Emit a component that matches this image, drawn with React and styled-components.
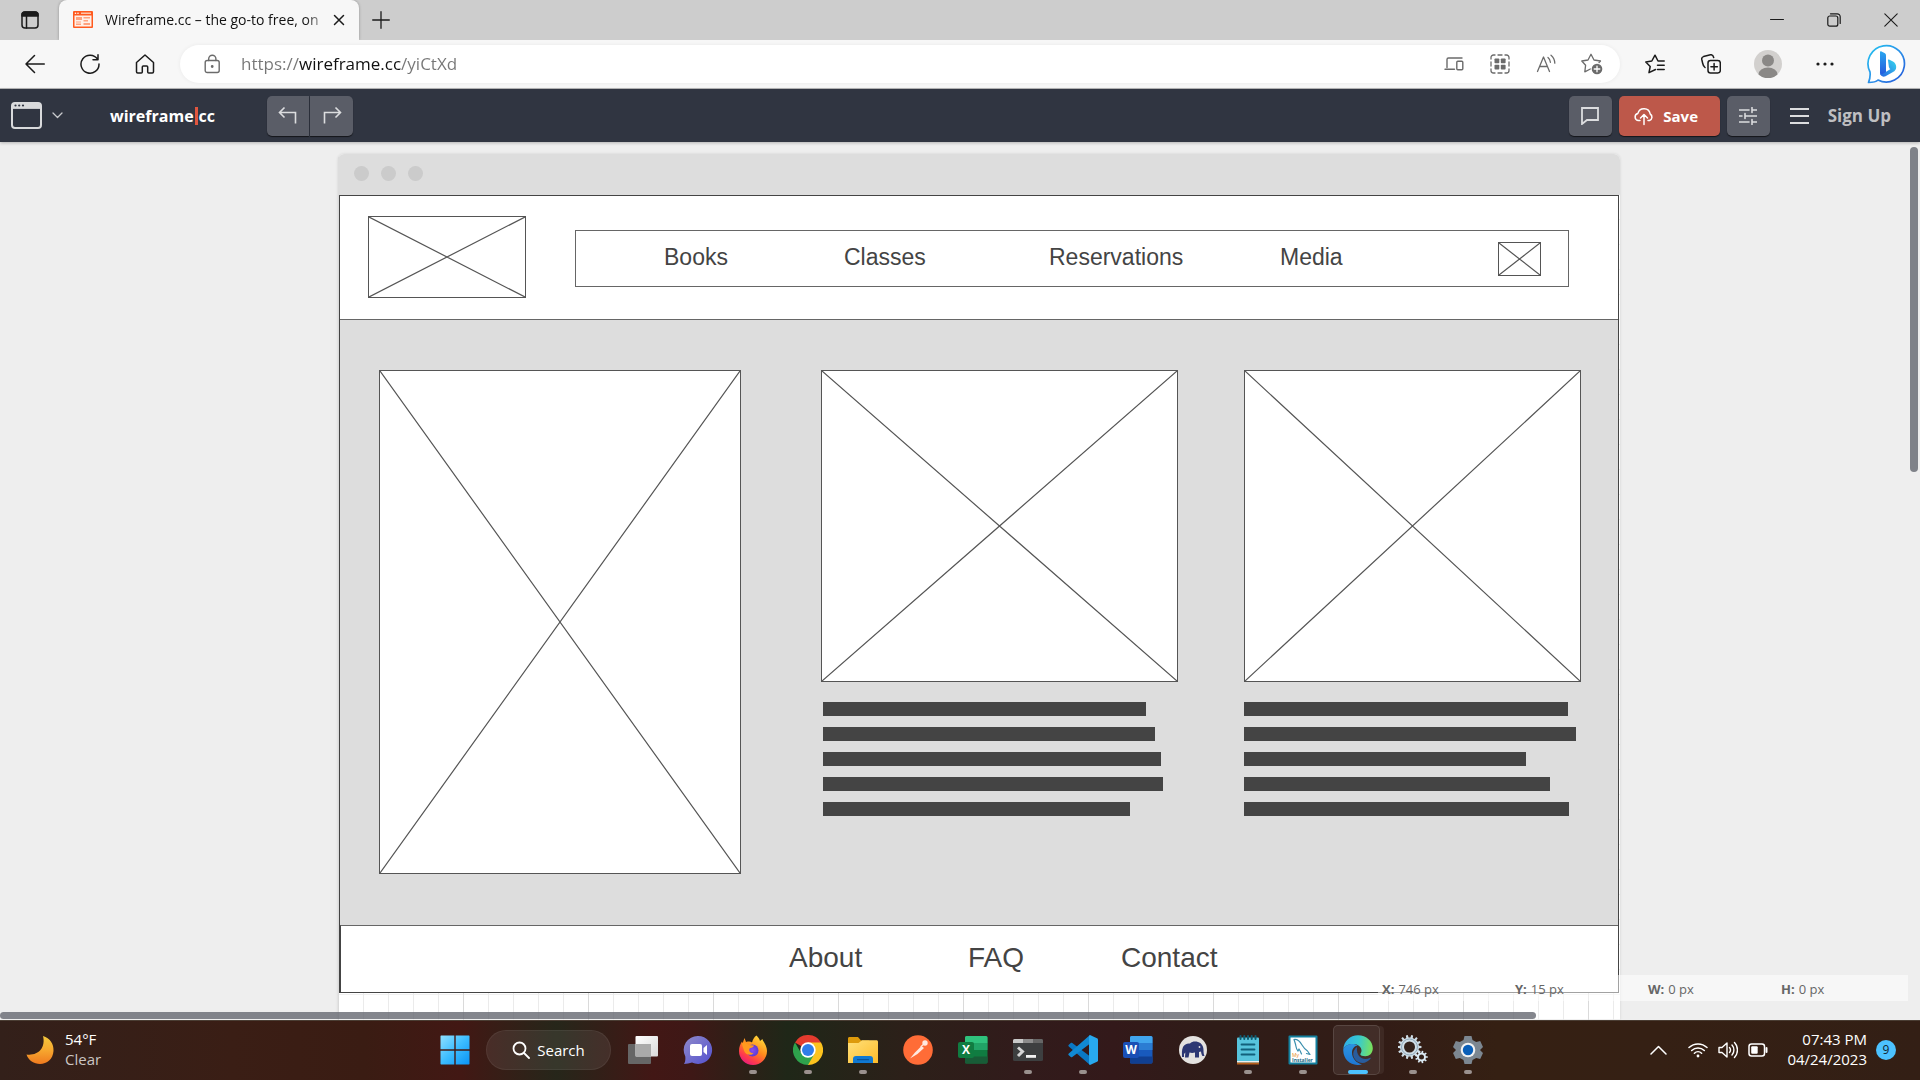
import React from "react";
import styled, { createGlobalStyle, css } from "styled-components";

const UI = `"Open Sans", "Noto Sans", sans-serif`;
const WIRE = `"Liberation Sans", Arial, sans-serif`;
const INK = "#444";

const GlobalStyle = createGlobalStyle`
  * { box-sizing: border-box; }
  html, body { margin: 0; padding: 0; }
  body { font-family: ${UI}; overflow: hidden; }
  button { font: inherit; color: inherit; border: 0; padding: 0; margin: 0; background: none; cursor: pointer; }
  a { color: inherit; text-decoration: none; }
  svg { display: block; flex: none; }
`;

const Page = styled.div`
  display: flex;
  flex-direction: column;
  height: 100vh;
  background: #eee;
`;

/* ---------- browser chrome ---------- */

const TabStrip = styled.div`
  display: flex;
  height: 40px;
  background: #cdcdcd;
`;

const IconCell = styled.button`
  display: flex;
  align-items: center;
  justify-content: center;
  width: ${(p) => p.$w || 56}px;
  height: 100%;
  color: ${(p) => p.$color || "#1b1b1b"};
`;

const Tab = styled.div`
  display: flex;
  align-items: center;
  width: 300px;
  padding: 0 8px 0 14px;
  border-radius: 8px 8px 0 0;
  background: #f7f7f7;
  box-shadow: 0 0 3px rgba(0, 0, 0, 0.3);
  clip-path: inset(0 -4px 0 -4px);
`;

const TabTitle = styled.span`
  flex: 1;
  margin-left: 12px;
  white-space: nowrap;
  font-size: 14px;
  line-height: 20px;
  color: #111;
  mask-image: linear-gradient(to right, #000 90%, rgba(0, 0, 0, 0.2) 100%);
`;

const Spacer = styled.div`
  flex: 1;
`;

const Toolbar = styled.div`
  display: flex;
  align-items: center;
  height: 49px;
  padding-left: 7px;
  background: #f7f7f7;
  border-bottom: 1px solid #b9b9bb;
`;

const AddressBar = styled.form`
  display: flex;
  align-items: center;
  flex: 1;
  height: 38px;
  margin: 0 7px 0 8px;
  padding: 0 5px 0 24px;
  border-radius: 19px;
  background: #fff;
  box-shadow: 0 0 4px rgba(0, 0, 0, 0.06);
`;

const AddressInput = styled.input`
  flex: 1;
  min-width: 0;
  margin-left: 20px;
  padding: 0;
  border: 0;
  outline: 0;
  font-family: ${UI};
  font-size: 17px;
  line-height: 24px;
  color: #767676;
  background: linear-gradient(to right, #767676 58px, #111 58px, #111 160px, #767676 160px);
  background-clip: text;
  -webkit-text-fill-color: transparent;
`;

/* ---------- application bar ---------- */

const AppBar = styled.header`
  display: flex;
  align-items: center;
  height: 53px;
  padding: 0 29px 0 11px;
  background: #303541;
  box-shadow: 0 1px 3px rgba(0, 0, 0, 0.25);
  position: relative;
  z-index: 2;
`;

const DeviceButton = styled.button`
  display: flex;
  align-items: center;
  gap: 10px;
`;

const Brand = styled.a`
  display: flex;
  align-items: center;
  margin: 0 52px 0 47px;
  font-size: 16px;
  line-height: 24px;
  font-weight: 700;
  color: #fff;
`;

const BrandBar = styled.i`
  width: 3px;
  height: 18px;
  margin: 0 1px;
  background: #e0563f;
`;

const ToolButton = styled.button`
  display: flex;
  align-items: center;
  justify-content: center;
  gap: 9px;
  width: ${(p) => p.$w || 43}px;
  height: 40px;
  padding-right: ${(p) => (p.$primary ? 6 : 0)}px;
  border-radius: 5px;
  background: ${(p) => (p.$primary ? "#bd584a" : "#5a5d67")};
  color: ${(p) => (p.$primary ? "#fff" : "#dcdddf")};
  box-shadow: 0 1px 1px rgba(0, 0, 0, 0.6);
  font-size: 15px;
  font-weight: 700;
  ${(p) => p.$side === "left" && css`border-radius: 5px 0 0 5px;`}
  ${(p) => p.$side === "right" && css`border-radius: 0 5px 5px 0;`}
`;

const Group = styled.div`
  display: flex;
  gap: ${(p) => p.$gap}px;
`;

const MenuButton = styled.button`
  display: flex;
  margin: 0 19px 0 20px;
`;

const SignUp = styled.a`
  font-size: 17px;
  line-height: 24px;
  font-weight: 700;
  color: #bfbfc1;
`;

/* ---------- canvas ---------- */

const Workspace = styled.main`
  position: relative;
  flex: 1;
  min-height: 0;
  overflow: hidden;
  padding: 12px 300px 0 338px;
  background: #eee;
`;

const Canvas = styled.section`
  min-height: 100%;
  border-radius: 6px 6px 0 0;
  background-color: #fff;
  background-image: linear-gradient(to right, #dadada 1px, transparent 1px),
    linear-gradient(to right, #ebebeb 1px, transparent 1px),
    linear-gradient(to bottom, #f0f0f0 1px, transparent 1px);
  background-size: 125px 100%, 25px 100%, 100% 25px;
  background-position: 0 0, 0 0, 0 15px;
  box-shadow: 0 0 3px rgba(0, 0, 0, 0.12);
`;

const WindowBar = styled.div`
  display: flex;
  align-items: center;
  gap: 12px;
  height: 41px;
  padding: 0 16px 2px;
  border-radius: 6px 6px 0 0;
  background: #ddd;
`;

const Dot = styled.i`
  width: 15px;
  height: 15px;
  border-radius: 50%;
  background: #cbcbcb;
`;

const Sheet = styled.div`
  margin: 0 1px;
  border: 1px solid ${INK};
  font-family: ${WIRE};
  color: ${INK};
`;

const WireHeader = styled.div`
  display: grid;
  grid-template-columns: 158fr 994fr;
  align-items: start;
  gap: 49px;
  height: 124px;
  padding: 20px 49px 0 28px;
  background: #fff;
  border-bottom: 1px solid #666;
`;

const WireNav = styled.nav`
  display: grid;
  grid-template-columns: 180fr 205fr 231fr 218fr 43fr;
  align-items: center;
  height: 57px;
  margin-top: 14px;
  padding: 0 27px 0 88px;
  border: 1px solid #666;
`;

const WireLink = styled.a`
  padding-bottom: 3px;
  font-size: ${(p) => p.$size}px;
  line-height: 32px;
`;

const WireMain = styled.div`
  display: grid;
  grid-template-columns: 362fr 80fr 357fr 66fr 337fr;
  height: 605px;
  padding: 50px 37px 0 39px;
  background: #ddd;
`;

const Column = styled.div`
  grid-column: ${(p) => p.$col};
`;

const Placeholder = styled.div`
  height: ${(p) => p.$h}px;
  border: 1px solid #555;
  background: #fff;
  svg { width: 100%; height: 100%; }
`;

const Lines = styled.div`
  display: flex;
  flex-direction: column;
  gap: 11px;
  padding: 20px 0 0 ${(p) => p.$inset}px;
`;

const Line = styled.i`
  width: ${(p) => p.$w}px;
  max-width: 100%;
  height: 14px;
  background: ${INK};
`;

const WireFooter = styled.nav`
  display: grid;
  grid-template-columns: 179fr 153fr 497fr;
  align-items: center;
  height: 67px;
  padding-left: 448px;
  background: #fff;
  border-top: 1px solid #666;
  border-left: 1px solid ${INK};
`;

const Readout = styled.dl`
  position: absolute;
  right: 12px;
  bottom: 19px;
  display: grid;
  grid-template-columns: repeat(4, 133px);
  width: 530px;
  height: 26px;
  margin: 0;
  padding: 2px 0 0 4px;
  align-items: center;
  background: rgba(255, 255, 255, 0.5);
  font-size: 13px;
  line-height: 18px;
  color: #666;
`;

const Reading = styled.div`
  display: flex;
  gap: 4px;
  dt { font-weight: 700; }
  dd { margin: 0; }
`;

const VerticalThumb = styled.div`
  position: absolute;
  right: 2px;
  top: 5px;
  width: 8px;
  height: 325px;
  border-radius: 4px;
  background: #7f8289;
`;

const HorizontalThumb = styled.div`
  position: absolute;
  left: 0;
  bottom: 1px;
  width: 80%;
  height: 7px;
  border-radius: 4px;
  background: rgba(101, 104, 113, 0.8);
`;

/* ---------- taskbar ---------- */

const Taskbar = styled.footer`
  display: grid;
  grid-template-columns: 1fr auto 1fr;
  height: 60px;
  box-shadow: inset 0 1px 0 #4a3d33;
  color: #fff;
  background: linear-gradient(to right, #33201a 0%, #3a1e15 12%, #3a1c13 19%, #421814 24%, #26261a 29%, #421715 34%, #3e1816 36%, #1f2718 41%, #2c2019 47%, #311b1b 53%, #33191a 58%, #2f1c18 63%, #321c16 72%, #352013 78%, #352014 86%, #331f15 100%);
`;

const Weather = styled.button`
  display: flex;
  align-items: center;
  gap: 11px;
  padding-left: 26px;
  text-align: left;
  font-size: 15px;
  line-height: 20px;
`;

const Stack = styled.span`
  display: flex;
  flex-direction: column;
  padding-bottom: 2px;
  align-items: ${(p) => (p.$end ? "flex-end" : "flex-start")};
`;

const Muted = styled.span`
  color: #cbc5c2;
`;

const Apps = styled.div`
  display: flex;
  align-items: center;
  padding-left: 2px;
`;

const TaskButton = styled.button`
  position: relative;
  display: flex;
  align-items: center;
  justify-content: center;
  width: 55px;
  height: 100%;
`;

const ActivePlate = styled.span`
  position: absolute;
  inset: 5px 5px 5px 3px;
  border: 1px solid rgba(255, 255, 255, 0.12);
  border-radius: 5px;
  background: rgba(255, 255, 255, 0.08);
  box-shadow: 5px 0 0 -1px rgba(255, 255, 255, 0.06);
`;

const Running = styled.i`
  position: absolute;
  bottom: 6px;
  width: ${(p) => (p.$active ? 20 : 8)}px;
  height: 4px;
  border-radius: 2px;
  background: ${(p) => (p.$active ? "#4cc2ff" : "#9a918e")};
`;

const SearchPill = styled.button`
  display: flex;
  align-items: center;
  justify-content: center;
  gap: 7px;
  width: 125px;
  height: 40px;
  margin: 0 4px;
  border-radius: 20px;
  border: 1px solid rgba(255, 255, 255, 0.06);
  background: rgba(255, 255, 255, 0.08);
  font-size: 15px;
  line-height: 20px;
`;

const Tray = styled.div`
  display: flex;
  align-items: center;
  justify-content: flex-end;
  padding-right: 24px;
`;

const TrayGroup = styled.button`
  display: flex;
  align-items: center;
  gap: 10px;
  margin: 0 19px 0 21px;
`;

const Clock = styled.button`
  font-size: 15px;
  line-height: 20px;
`;

const Badge = styled.span`
  display: flex;
  align-items: center;
  justify-content: center;
  width: 20px;
  height: 20px;
  margin-left: 9px;
  border-radius: 50%;
  background: #4cc2ff;
  color: #12242f;
  font-size: 12px;
  line-height: 20px;
`;

/* ---------- drawings ---------- */

const Svg = ({ s = 20, w, h, box, sw = 1.5, children, ...rest }) => (
  <svg
    width={w || s}
    height={h || s}
    viewBox={box || `0 0 ${w || s} ${h || s}`}
    fill="none"
    stroke="currentColor"
    strokeWidth={sw}
    strokeLinecap="round"
    strokeLinejoin="round"
    aria-hidden="true"
    {...rest}
  >
    {children}
  </svg>
);

const Cross = () => (
  <svg viewBox="0 0 100 100" preserveAspectRatio="none" aria-hidden="true">
    <path d="M0 0L100 100M100 0L0 100" stroke="#555" strokeWidth="1.2" vectorEffect="non-scaling-stroke" fill="none" />
  </svg>
);

const TabActions = () => (
  <Svg w={20} h={20}>
    <rect x="2" y="2" width="16" height="16" rx="3" />
    <path d="M2 6V5a3 3 0 0 1 3-3h10a3 3 0 0 1 3 3v1z" fill="currentColor" />
    <path d="M6.500 6V18" />
  </Svg>
);

const Favicon = () => (
  <Svg w={20} h={18} stroke="none">
    <rect width="20" height="17" rx="1" fill="#ff5a1f" />
    <rect x="1.500" y="4.500" width="17" height="11" fill="#fff0e8" />
    <path d="M3 6h6v3H3zM3 10.500h5v1H3zM3 12.500h5v1.500H3zM10.500 6H17v1.500h-6.500zM10.500 9H15v1.500h-4.500zM10.500 12H17v2h-6.500z" fill="#ffa27f" />
    <circle cx="2.500" cy="2.200" r=".8" fill="#fff" />
    <circle cx="5" cy="2.200" r=".8" fill="#fff" />
    <rect x="8" y="1.500" width="10" height="1.500" fill="#ffc3a8" />
  </Svg>
);

const DeviceWindow = () => (
  <Svg w={31} h={27} sw={2}>
    <rect x="1" y="1" width="29" height="25" rx="3" stroke="#d9dadc" fill="#303541" />
    <path d="M1 6V4a3 3 0 0 1 3-3h23a3 3 0 0 1 3 3v2z" fill="#d9dadc" stroke="#d9dadc" strokeWidth="1" />
    <g fill="#303541" stroke="none">
      <circle cx="4.500" cy="3.500" r="1.100" /><circle cx="8.200" cy="3.500" r="1.100" /><circle cx="12" cy="3.500" r="1.100" />
    </g>
  </Svg>
);

const Bing = () => (
  <Svg w={40} h={40}>
    <defs>
      <linearGradient id="bingRing" x1="0" y1="0" x2="1" y2="1">
        <stop offset="0" stopColor="#22c4f0" /><stop offset=".55" stopColor="#2b8de8" /><stop offset="1" stopColor="#2455d8" />
      </linearGradient>
      <linearGradient id="bingStem" x1="0" y1="0" x2="0" y2="1">
        <stop offset="0" stopColor="#2aa7f0" /><stop offset="1" stopColor="#2458dc" />
      </linearGradient>
      <linearGradient id="bingBowl" x1="1" y1="0" x2="0" y2="1">
        <stop offset="0" stopColor="#37d8ef" /><stop offset="1" stopColor="#2563e0" />
      </linearGradient>
    </defs>
    <path d="M1.500 38.500C3 35 3.500 32 3 28A18.200 18.200 0 1 1 11 36C8.500 38.500 5 38.500 1.500 38.500Z" fill="#fff" stroke="url(#bingRing)" strokeWidth="1.700" />
    <path d="M13 8.200c0-.8.800-1.200 1.500-.8l3 1.700c1 .6 1.500 1.500 1.500 2.600V29l-3.200 2c-1.500.6-2.800-.8-2.800-2z" fill="url(#bingStem)" stroke="none" />
    <path d="M21 16.500c-.3-.8.300-1.300 1-1l3.500 1.700c2.500 1.300 3.700 3.300 3.700 5.800 0 2.400-1.300 4-3.200 5.100l-7.500 4.100c-2.700 1.300-5.500-.5-5.500-3.200 1 1.200 2.500 1.100 3.800.3l6.700-4.300c-1-.3-1.300-1.300-1.600-2z" fill="url(#bingBowl)" stroke="none" />
  </Svg>
);

const Moon = () => (
  <Svg w={28} h={30}>
    <defs><linearGradient id="moon" x1="0" y1="0" x2="0" y2="1"><stop offset="0" stopColor="#f5c93c" /><stop offset=".5" stopColor="#f7a82f" /><stop offset="1" stopColor="#f07a1f" /></linearGradient></defs>
    <path d="M17 1C24 3 28 9 27.500 16 27 24 21 29 14 29 8 29 2.500 25.500 .5 19.500 12 21 20 13 17 1Z" fill="url(#moon)" stroke="none" />
  </Svg>
);

const WindowsLogo = () => (
  <Svg s={30} stroke="none">
    <defs><linearGradient id="win" x1="0" y1="0" x2="1" y2="1"><stop offset="0" stopColor="#8fe0ff" /><stop offset=".5" stopColor="#3cbcff" /><stop offset="1" stopColor="#0a93f5" /></linearGradient></defs>
    <path d="M1 .5h13.300v13.700H.5V1zM15.700.5H29l.5.500v13.200H15.700zM.5 15.700h13.800v13.800H1l-.5-.5zM15.700 15.700h13.800V29l-.5.500H15.700z" fill="url(#win)" />
  </Svg>
);

const TaskView = () => (
  <Svg s={30} stroke="none">
    <defs><linearGradient id="tvf" x1="0" y1="0" x2="1" y2="1"><stop offset="0" stopColor="#fff" /><stop offset="1" stopColor="#d9d9d9" /></linearGradient></defs>
    <rect x="0" y="9" width="23" height="20" rx="1" fill="#666" />
    <rect x="7.500" y="1" width="22.500" height="20.500" rx="1" fill="url(#tvf)" />
    <path d="M7.500 9H23v12.500H7.500z" fill="#aaa" />
  </Svg>
);

const Chat = () => (
  <Svg s={30} stroke="none">
    <defs><linearGradient id="chat" x1="0" y1="0" x2="1" y2="1"><stop offset="0" stopColor="#8f8ac9" /><stop offset="1" stopColor="#5350d0" /></linearGradient></defs>
    <path d="M15 1a14 14 0 1 1-6 26.600C6.500 28.500 4 29 1 29c1.400-2 1.500-4.500 1.300-7.500A14 14 0 0 1 15 1z" fill="url(#chat)" />
    <rect x="7" y="9" width="12" height="12" rx="2" fill="#fff" />
    <path d="M20.500 13l3.500-3v10l-3.500-3z" fill="#fff" />
  </Svg>
);

const Firefox = () => (
  <Svg s={30} stroke="none">
    <defs>
      <linearGradient id="ff" x1=".8" y1="0" x2=".2" y2="1"><stop offset="0" stopColor="#ffe23c" /><stop offset=".45" stopColor="#ff8a1c" /><stop offset=".75" stopColor="#ff3d4a" /><stop offset="1" stopColor="#e31587" /></linearGradient>
      <radialGradient id="ffc"><stop offset="0" stopColor="#8a4df0" /><stop offset="1" stopColor="#5b3bd0" /></radialGradient>
    </defs>
    <path d="M18.500.5c2 2 3 3.500 3.500 5.500l2.500-2c0 2 4.500 6 4.500 12a14 14 0 0 1-28 0c0-4 1.500-7.500 3-9.500l.5 2L6.500 3l1.500 4c3-.8 5-.5 6 .5 1-3 2-5.500 4.500-7z" fill="url(#ff)" />
    <circle cx="14.500" cy="15.500" r="6" fill="url(#ffc)" />
    <path d="M4 8c3-1 5 0 7 2l5 .5c-.5 2-3 2.500-4.500 3-1 3 1.500 5 4 4.500-2 3-8 2.500-9.500-2.500C5.300 12.500 4 11 4 8z" fill="#ff9a1f" />
  </Svg>
);

const Chrome = () => (
  <Svg s={30} stroke="none">
    <path d="M15 15L2 7.500A15 15 0 0 1 28 7.500z" fill="#e33b2e" />
    <path d="M15 15V7.500h13A15 15 0 0 1 15 30z" fill="#fcc31e" />
    <path d="M15 15l6.500 3.700L15 30A15 15 0 0 1 2 7.500l6.500 11.200z" fill="#2ea24c" />
    <circle cx="15" cy="15" r="7.700" fill="#fff" />
    <circle cx="15" cy="15" r="6" fill="#2f7de9" />
  </Svg>
);

const Explorer = () => (
  <Svg s={30} stroke="none">
    <defs><linearGradient id="fold" x1="0" y1="0" x2="1" y2="1"><stop offset="0" stopColor="#ffe07a" /><stop offset="1" stopColor="#fdbc2a" /></linearGradient></defs>
    <path d="M0 3.500C0 2.500.7 2 1.500 2H10l3 3.500h8V12H0z" fill="#dd9a0b" />
    <path d="M0 8h10.500L14 5.200h14.500c.8 0 1.500.6 1.500 1.500V28H0z" fill="url(#fold)" />
    <path d="M5 28v-4a3 3 0 0 1 3-3h14a3 3 0 0 1 3 3v4z" fill="#1079d2" />
    <path d="M9 24.200h12v1H9z" fill="#0a4b8c" />
  </Svg>
);

const Postman = () => (
  <Svg s={30}>
    <circle cx="15" cy="15" r="14.800" fill="#ff6c37" stroke="none" />
    <path d="M7 23.500l5-6 6.500-6.500 2.500 2-6.500 6z" fill="#ffe9e0" stroke="none" />
    <circle cx="22" cy="8" r="2.700" fill="#ffe9e0" stroke="none" />
    <path d="M18 11.500l3-2.500" stroke="#ffe9e0" strokeWidth="1.200" />
  </Svg>
);

const AppLetter = styled.span`
  position: absolute;
  left: 13px;
  display: flex;
  align-items: center;
  justify-content: center;
  width: 16px;
  height: 16px;
  border-radius: 2px;
  background: ${(p) => p.$bg};
  color: #fff;
  font-size: 12px;
  font-weight: 700;
  line-height: 16px;
`;

const Office = ({ tones, letter, plate }) => (
  <>
    <Svg s={30} stroke="none">
      <rect x="7" y="1" width="22.500" height="27.500" rx="1.500" fill={tones[2]} />
      <path d="M8.500 1H28a1.500 1.500 0 0 1 1.500 1.500V8H7V2.500A1.500 1.500 0 0 1 8.500 1z" fill={tones[0]} />
      <path d="M7 8h22.500v7H7z" fill={tones[1]} />
      <path d="M7 21.500h22.500V27a1.500 1.500 0 0 1-1.500 1.500H8.500A1.500 1.500 0 0 1 7 27z" fill={tones[3]} />
    </Svg>
    <AppLetter $bg={plate}>{letter}</AppLetter>
  </>
);

const Terminal = () => (
  <Svg s={30} stroke="none">
    <rect x="0" y="4" width="30" height="22" rx="1.500" fill="#3d3f40" />
    <path d="M0 8V5.500A1.500 1.500 0 0 1 1.500 4H10v4z" fill="#c9c9c9" />
    <path d="M10 4h10v4H10z" fill="#8c8c8c" />
    <path d="M20 4h8.500A1.500 1.500 0 0 1 30 5.500V8H20z" fill="#666" />
    <path d="M5 12.500l4.500 4L5 21" stroke="#d5d5d5" strokeWidth="3" fill="none" strokeLinecap="butt" strokeLinejoin="miter" />
    <rect x="13" y="20" width="10" height="2.800" fill="#f2f2f2" />
  </Svg>
);

const VSCode = () => (
  <Svg s={30} stroke="none">
    <path d="M22 30L.8 11.600c-.6-.6-.6-1.300 0-1.800l2-1.700c.5-.4 1-.4 1.500 0L22.500 21.700z" fill="#0a78c4" />
    <path d="M22 0L.8 18.400c-.6.600-.6 1.300 0 1.800l2 1.700c.5.400 1 .4 1.500 0L22.500 8.300z" fill="#118ad4" />
    <path d="M22 0l7 3.200c.6.300 1 .8 1 1.500v20.600c0 .7-.4 1.200-1 1.500L22 30l-1-1V1z" fill="#28a9ee" />
  </Svg>
);

const Elephant = () => (
  <Svg s={30} stroke="none">
    <circle cx="15" cy="15" r="14" fill="#e4e2e0" />
    <path d="M4 22c0-3-.5-7 1-10 1.500-2.500 4-4 7-3.500 2-2 5-2.500 8-1.500 3.500 1 5.500 4 5.500 8 0 2.500.3 4.500 1 6h-2c-1-1.500-1.300-3-1.500-4.500l-2 .5v5.500h-4v-5c-2 .7-4 .6-5.500 0l-1 5H7l.3-5L6 19v3z" fill="#2c3773" />
    <circle cx="21.500" cy="12" r=".9" fill="#e4e2e0" />
  </Svg>
);

const Notepad = () => (
  <Svg s={30} stroke="none">
    <rect x="4" y="2.500" width="22" height="26" rx="1" fill="#57c4dc" />
    <path d="M4 26h22v1.500H4z" fill="#eee" />
    <path d="M4 27.500h22v2H4z" fill="#b85f1c" />
    <path d="M8.500 9.500h13M8.500 14.500h13M8.500 19.500h13" stroke="#12607b" strokeWidth="1.800" />
    <path d="M7.500 1v3M11.300 1v3M15 1v3M18.700 1v3M22.500 1v3" stroke="#0f5a70" strokeWidth="2" />
  </Svg>
);

const MySQL = () => (
  <Svg s={30} stroke="none">
    <rect x="1.500" y="1.500" width="27" height="27" fill="#fff" stroke="#13809f" strokeWidth="2" />
    <path d="M6 4.500c3-.5 6 2 8 5.500 1.500 2.500 2.500 4 5.500 6l2.500 3.500-3.500-1M6 4.500c1 3 1.500 4 2 7 .3 2 1 3.500 2 4.500l1-2c1.500 2 2 3.500 2.500 5" stroke="#3b8fae" strokeWidth="1.200" fill="none" />
    <text x="4" y="22" fontSize="5" fontFamily="Open Sans" fill="#e88b1a">My</text>
    <text x="4" y="27" fontSize="5" fontWeight="700" fontFamily="Open Sans" fill="#1b6c87">Installer</text>
  </Svg>
);

const Edge = () => (
  <Svg s={30} stroke="none">
    <defs>
      <linearGradient id="eg1" x1="0" y1=".3" x2="1" y2=".4"><stop offset="0" stopColor="#1fa6e6" /><stop offset=".5" stopColor="#25c4cf" /><stop offset="1" stopColor="#6ee04f" /></linearGradient>
      <linearGradient id="eg2" x1="0" y1="0" x2="0" y2="1"><stop offset="0" stopColor="#1a8be0" /><stop offset="1" stopColor="#0c6cd0" /></linearGradient>
    </defs>
    <path d="M.3 14C1 6 7 .2 15 .2c8.500 0 14.800 6 14.800 13 0 5-3.500 8-7.500 8-3 0-5-.8-5-2 0-.8 1.200-1.200 1.200-3.700 0-3.500-3.500-6.500-8-6.500C5.500 9 1.500 11 .3 14z" fill="url(#eg1)" />
    <path d="M.3 14C1.500 11 5.500 9 9.500 9c2 0 4 .6 5.300 1.500C11 11 9 14 9 17.500c0 6 4.500 10.500 10 12C9 32 .5 25 .3 16z" fill="url(#eg2)" />
    <path d="M14 12c-2 1.500-3.800 4-3.800 7 0 5 4.500 9 9.300 9 3 0 5.500-1.500 8-4.200.5-.6 0-1.200-.7-.8-6 3-14-.5-12.800-11z" fill="#174f94" />
  </Svg>
);

const gearPath = (cx, cy, r, R, n) => {
  const pts = [];
  for (let i = 0; i < n; i++) {
    const a = (i / n) * Math.PI * 2;
    const st = (Math.PI * 2) / n;
    [[r, -0.28], [R, -0.18], [R, 0.18], [r, 0.28]].forEach(([rad, o]) => {
      pts.push(`${(cx + rad * Math.cos(a + o * st)).toFixed(2)} ${(cy + rad * Math.sin(a + o * st)).toFixed(2)}`);
    });
  }
  return `M${pts.join("L")}Z`;
};

const Gears = () => (
  <Svg s={30} stroke="none">
    <path d={gearPath(11.5, 12, 9.5, 12, 14)} fill="#cfdde6" />
    <circle cx="11.500" cy="12" r="8" fill="none" stroke="#8fa9bb" strokeWidth="1" />
    <circle cx="11.500" cy="12" r="5.500" fill="#33211a" />
    <path d={gearPath(23.5, 22, 4.5, 6.3, 9)} fill="#dcebf5" />
    <circle cx="23.500" cy="22" r="2.500" fill="#33211a" />
  </Svg>
);

const Settings = () => (
  <Svg s={30}>
    <path d="M11.500 1h7l1 4 3.700 2.100 4-1.200 2.800 6-3 3.100 3 3.100-2.800 6-4-1.200-3.700 2.100-1 4h-7l-1-4-3.700-2.100-4 1.200-2.800-6 3-3.100-3-3.100 2.800-6 4 1.200L10.500 5z" fill="#7c8791" stroke="none" />
    <circle cx="15" cy="15" r="7.300" fill="#f2f2f2" stroke="none" />
    <circle cx="15" cy="15" r="5.200" fill="#0a5fb8" stroke="none" />
  </Svg>
);

const TASKS = [
  { name: "Task view", icon: <TaskView /> },
  { name: "Chat", icon: <Chat /> },
  { name: "Firefox", icon: <Firefox />, running: true },
  { name: "Chrome", icon: <Chrome />, running: true },
  { name: "File Explorer", icon: <Explorer />, running: true },
  { name: "Postman", icon: <Postman /> },
  { name: "Excel", icon: <Office letter="X" plate="#107c41" tones={["#2fc27d", "#21a366", "#107c41", "#185c37"]} /> },
  { name: "Terminal", icon: <Terminal />, running: true },
  { name: "Visual Studio Code", icon: <VSCode />, running: true },
  { name: "Word", icon: <Office letter="W" plate="#1a4fb5" tones={["#41a5ee", "#2b7cd3", "#185abd", "#103f91"]} /> },
  { name: "pgAdmin", icon: <Elephant /> },
  { name: "Notepad", icon: <Notepad />, running: true },
  { name: "MySQL Installer", icon: <MySQL />, running: true },
  { name: "Edge", icon: <Edge />, running: true, active: true },
  { name: "Services", icon: <Gears />, running: true },
  { name: "Settings", icon: <Settings />, running: true },
];

const TEXT_BLOCKS = [
  { col: 3, inset: 2, lines: [323, 332, 338, 340, 307] },
  { col: 5, inset: 0, lines: [324, 332, 282, 306, 325] },
];

const READINGS = [["X:", "746 px"], ["Y:", "15 px"], ["W:", "0 px"], ["H:", "0 px"]];

function BrowserChrome() {
  return (
    <>
      <TabStrip>
        <IconCell $w={59} aria-label="Tab actions"><TabActions /></IconCell>
        <Tab>
          <Favicon />
          <TabTitle>Wireframe.cc – the go-to free, on</TabTitle>
          <IconCell $w={24} aria-label="Close tab"><Svg s={12}><path d="M1.500 1.500l9 9M10.500 1.500l-9 9" /></Svg></IconCell>
        </Tab>
        <IconCell $w={43} aria-label="New tab"><Svg s={18} sw={1.3}><path d="M9 .7v16.600M.7 9h16.600" /></Svg></IconCell>
        <Spacer />
        <IconCell $w={57} aria-label="Minimize"><Svg s={14} sw={1}><path d="M.5 6.500h13" /></Svg></IconCell>
        <IconCell $w={57} aria-label="Restore"><Svg s={14} sw={1.2}><rect x=".8" y="3" width="10" height="10.200" rx="2" /><path d="M3.500 .8h6.700a3 3 0 0 1 3 3v6.700" /></Svg></IconCell>
        <IconCell $w={58} aria-label="Close"><Svg s={14} sw={1.1}><path d="M.8.8l12.400 12.400M13.200.8L.8 13.200" /></Svg></IconCell>
      </TabStrip>
      <Toolbar>
        <IconCell $w={55} aria-label="Back"><Svg s={20}><path d="M19.300 10H1M9.500 1.500L1 10l8.500 8.500" /></Svg></IconCell>
        <IconCell $w={55} aria-label="Refresh"><Svg s={20}><path d="M17.500 5.200A9 9 0 1 0 19 10M18 .8v5h-5" /></Svg></IconCell>
        <IconCell $w={55} aria-label="Home"><Svg s={20}><path d="M1.500 8.500L10 1l8.500 7.500v9.200c0 .7-.5 1.200-1.200 1.200h-3.600c-.6 0-1-.4-1-1V13c0-.6-.4-1-1-1H8.300c-.6 0-1 .4-1 1v4.900c0 .6-.4 1-1 1H2.700c-.7 0-1.200-.5-1.200-1.200z" /></Svg></IconCell>
        <AddressBar>
          <Svg w={17} h={20} sw={1.4} color="#6b6b6b"><rect x="1.200" y="6.500" width="14" height="12" rx="2" /><path d="M4.700 6.500V4.800a3.600 3.600 0 0 1 7.200 0v1.700" /><circle cx="8.200" cy="12.500" r=".7" fill="currentColor" /></Svg>
          <AddressInput aria-label="Address" defaultValue="https://wireframe.cc/yiCtXd" spellCheck={false} />
          <IconCell type="button" $w={46} $color="#6b6b6b" aria-label="Send to device"><Svg w={20} h={16} sw={1.4}><path d="M3 11.500V3.500a1.500 1.500 0 0 1 1.500-1.500H18M1 13.300h9.500" /><rect x="12.800" y="5.200" width="6" height="8.600" rx="1" /></Svg></IconCell>
          <IconCell type="button" $w={46} $color="#6b6b6b" aria-label="QR code"><Svg s={20} sw={1.3}><path d="M1 5V3.500A2.500 2.500 0 0 1 3.500 1H5M8 1h4M15 1h1.500A2.500 2.500 0 0 1 19 3.500V5M19 8v4M19 15v1.500a2.500 2.500 0 0 1-2.500 2.500H15M12 19H8M5 19H3.500A2.500 2.500 0 0 1 1 16.500V15M1 12V8" /><g fill="currentColor" stroke="none"><rect x="4.500" y="4.500" width="4.800" height="4.800" rx=".8" /><rect x="10.800" y="4.500" width="4.800" height="4.800" rx=".8" /><rect x="4.500" y="10.800" width="4.800" height="4.800" rx=".8" /><rect x="10.800" y="10.800" width="4.800" height="4.800" rx=".8" /></g></Svg></IconCell>
          <IconCell type="button" $w={46} $color="#6b6b6b" aria-label="Read aloud"><Svg s={20} sw={1.3}><path d="M1.500 17.500L7.500 3l6 14.500M3.600 12.500h7.800M12 3.500c1.500 1.200 2.300 2.800 2.400 4.800M15 1.200c2.400 2 3.700 4.700 3.800 8" /></Svg></IconCell>
          <IconCell type="button" $w={46} $color="#6b6b6b" aria-label="Add to favorites"><Svg s={22} sw={1.3}><path d="M9.300 16L3.800 18.800l.8-6.500L.8 8l6.200-1 3-5.700L13 7l6.500 1-1.500 1.600" /><circle cx="16" cy="16" r="5.300" fill="currentColor" stroke="none" /><path d="M16 13.200v5.600M13.200 16h5.600" stroke="#fff" /></Svg></IconCell>
        </AddressBar>
        <IconCell aria-label="Favorites"><Svg s={20}><path d="M10.500 15.500L4 18.700l1.200-6.200L.8 8l6-1L10 1.200 13 7h6.200M12.500 11.200h6.700M12.500 15.400h6.700" /></Svg></IconCell>
        <IconCell aria-label="Collections"><Svg s={20}><rect x="7" y="6.500" width="12.300" height="12.500" rx="2.500" /><path d="M13.100 9.500v6.500M9.900 12.800h6.500M4 13.500C2.500 12.500 2 11 1.600 9L.8 5.500C.5 4 1.300 3 2.500 2.600l7-1.800c1.500-.3 2.600.3 3.200 2.700" /></Svg></IconCell>
        <IconCell $w={57} aria-label="Profile">
          <Svg s={28} stroke="none"><circle cx="14" cy="14" r="14" fill="#d2d0ce" /><circle cx="14" cy="10.500" r="6" fill="#8a8886" /><path d="M4.500 24.500a9.500 7 0 0 1 19 0A14 14 0 0 1 4.500 24.500z" fill="#8a8886" /></Svg>
        </IconCell>
        <IconCell $w={57} aria-label="Settings and more"><Svg w={18} h={4} stroke="none"><g fill="#1b1b1b"><circle cx="2" cy="2" r="1.600" /><circle cx="9" cy="2" r="1.600" /><circle cx="16" cy="2" r="1.600" /></g></Svg></IconCell>
        <IconCell $w={67} aria-label="Bing"><Bing /></IconCell>
      </Toolbar>
    </>
  );
}

function EditorBar() {
  return (
    <AppBar>
      <DeviceButton aria-label="Device">
        <DeviceWindow />
        <Svg w={11} h={7} sw={1.3} color="#c9cacd"><path d="M1 1l4.500 4.500L10 1" /></Svg>
      </DeviceButton>
      <Brand href="#home">wireframe<BrandBar />cc</Brand>
      <Group $gap={1}>
        <ToolButton $side="left" $w={42} aria-label="Undo"><Svg s={20} sw={1.6}><path d="M6.500 1.500L1.500 6.500l5 5M1.500 6.500h16v11" strokeLinecap="butt" strokeLinejoin="miter" /></Svg></ToolButton>
        <ToolButton $side="right" aria-label="Redo"><Svg s={20} sw={1.6}><path d="M13.500 1.500l5 5-5 5M18.500 6.500h-16v11" strokeLinecap="butt" strokeLinejoin="miter" /></Svg></ToolButton>
      </Group>
      <Spacer />
      <Group $gap={7}>
        <ToolButton aria-label="Comments"><Svg s={18} sw={1.8}><path d="M1 1h16v12H6l-5 4z" strokeLinejoin="miter" /></Svg></ToolButton>
        <ToolButton $primary $w={101}>
          <Svg s={20} sw={1.5}><path d="M6 14.500H4.500a3.600 3.600 0 0 1-.6-7.100 6.300 6.300 0 0 1 12.300.6 3.600 3.600 0 0 1-.7 6.500H14M10 18.500V9M6.500 12L10 8.500l3.500 3.500" /></Svg>
          Save
        </ToolButton>
        <ToolButton aria-label="Options"><Svg s={18} sw={1.6}><path d="M0 3h10M13 3h5M13 .5v5M0 9h3M6 9h12M6 6.500v5M0 15h10M13 15h5M13 12.500v5" /></Svg></ToolButton>
      </Group>
      <MenuButton aria-label="Menu"><Svg w={19} h={18} sw={2} color="#dcdddf"><path d="M0 2h19M0 9h19M0 16h19" strokeLinecap="butt" /></Svg></MenuButton>
      <SignUp href="#signup">Sign Up</SignUp>
    </AppBar>
  );
}

function Editor() {
  return (
    <Workspace>
      <Canvas>
        <WindowBar><Dot /><Dot /><Dot /></WindowBar>
        <Sheet>
          <WireHeader>
            <Placeholder $h={82}><Cross /></Placeholder>
            <WireNav>
              {["Books", "Classes", "Reservations", "Media"].map((t) => (
                <WireLink key={t} href={`#${t}`} $size={23}>{t}</WireLink>
              ))}
              <Placeholder $h={34}><Cross /></Placeholder>
            </WireNav>
          </WireHeader>
          <WireMain>
            <Column $col={1}><Placeholder $h={504}><Cross /></Placeholder></Column>
            {TEXT_BLOCKS.map((b) => (
              <Column key={b.col} $col={b.col}>
                <Placeholder $h={312}><Cross /></Placeholder>
                <Lines $inset={b.inset}>{b.lines.map((w) => <Line key={w} $w={w} />)}</Lines>
              </Column>
            ))}
          </WireMain>
          <WireFooter>
            {["About", "FAQ", "Contact"].map((t) => (
              <WireLink key={t} href={`#${t}`} $size={28}>{t}</WireLink>
            ))}
          </WireFooter>
        </Sheet>
      </Canvas>
      <Readout>
        {READINGS.map(([k, v]) => <Reading key={k}><dt>{k}</dt><dd>{v}</dd></Reading>)}
      </Readout>
      <VerticalThumb />
      <HorizontalThumb />
    </Workspace>
  );
}

function SystemBar() {
  return (
    <Taskbar>
      <Weather>
        <Moon />
        <Stack><span>54°F</span><Muted>Clear</Muted></Stack>
      </Weather>
      <Apps>
        <TaskButton aria-label="Start"><WindowsLogo /></TaskButton>
        <SearchPill>
          <Svg s={18} sw={1.8}><circle cx="7.500" cy="7.500" r="6" /><path d="M12 12l5 5" /></Svg>
          Search
        </SearchPill>
        {TASKS.map((t) => (
          <TaskButton key={t.name} aria-label={t.name}>
            {t.active && <ActivePlate />}
            {t.icon}
            {t.running && <Running $active={t.active} />}
          </TaskButton>
        ))}
      </Apps>
      <Tray>
        <button aria-label="Show hidden icons"><Svg w={17} h={10}><path d="M1 9l7.500-7.500L16 9" /></Svg></button>
        <TrayGroup aria-label="Network, volume, battery">
          <Svg w={20} h={16} sw={1.5}><path d="M1 5.500a13 13 0 0 1 18 0M3.700 8.500a9 9 0 0 1 12.600 0M6.400 11.300a5.200 5.200 0 0 1 7.200 0" /><circle cx="10" cy="14" r="1.400" fill="currentColor" stroke="none" /></Svg>
          <Svg w={20} h={18} sw={1.4}><path d="M1 6.500h3L9 2v14l-5-4.500H1zM11.500 6.500a4 4 0 0 1 0 5M14 4a7.500 7.500 0 0 1 0 10M16.500 1.500a11 11 0 0 1 0 15" /></Svg>
          <Svg w={20} h={14} sw={1.5}><rect x="1" y="1" width="15.500" height="12" rx="2.500" /><rect x="3.200" y="3.200" width="6.500" height="7.600" rx="1" fill="currentColor" stroke="none" /><path d="M18.500 5v4" strokeWidth="2" /></Svg>
        </TrayGroup>
        <Clock><Stack $end><span>07:43 PM</span><span>04/24/2023</span></Stack></Clock>
        <Badge>9</Badge>
      </Tray>
    </Taskbar>
  );
}

export default function App() {
  return (
    <Page>
      <GlobalStyle />
      <BrowserChrome />
      <EditorBar />
      <Editor />
      <SystemBar />
    </Page>
  );
}
